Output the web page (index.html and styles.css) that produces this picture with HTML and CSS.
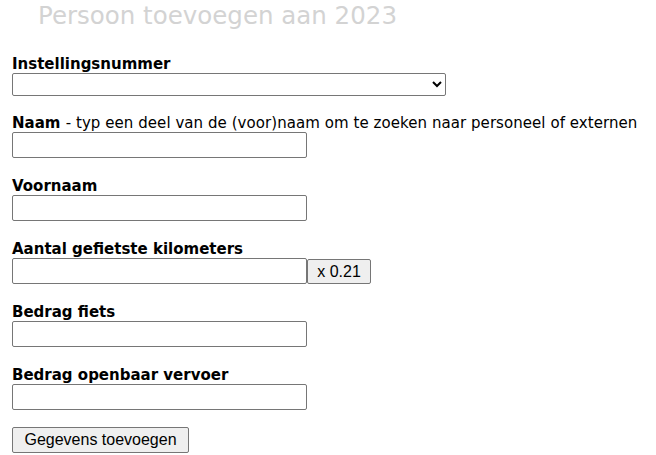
FILE: index.html
```html
<!DOCTYPE html>
<html lang="nl">
<head>
<meta charset="utf-8">
<title>Persoon toevoegen</title>
<link rel="stylesheet" href="styles.css">
</head>
<body>
<h1 class="title">Persoon toevoegen aan 2023</h1>
<form class="form">
  <div class="field field-first">
    <label class="label" for="inst">Instellingsnummer</label>
    <select class="select" id="inst"><option></option></select>
  </div>
  <div class="field">
    <label class="label" for="naam">Naam <span class="hint">- typ een deel van de (voor)naam om te zoeken naar personeel of externen</span></label>
    <input class="input" id="naam" type="text">
  </div>
  <div class="field">
    <label class="label" for="voornaam">Voornaam</label>
    <input class="input" id="voornaam" type="text">
  </div>
  <div class="field">
    <label class="label" for="km">Aantal gefietste kilometers</label>
    <div class="row">
      <input class="input" id="km" type="text"><button type="button" class="btn btn-small">x 0.21</button>
    </div>
  </div>
  <div class="field">
    <label class="label" for="fiets">Bedrag fiets</label>
    <input class="input" id="fiets" type="text">
  </div>
  <div class="field">
    <label class="label" for="ov">Bedrag openbaar vervoer</label>
    <input class="input" id="ov" type="text">
  </div>
  <button type="button" class="btn btn-submit">Gegevens toevoegen</button>
</form>
</body>
</html>
```
FILE: styles.css
```css
html, body {
  margin: 0;
  padding: 0;
  background: #fff;
}
body {
  padding: 0 12px;
  font-family: "DejaVu Sans", Verdana, sans-serif;
  color: #000;
}
.title {
  margin: 0 0 0 26px;
  padding-top: 2px;
  font-size: 24.5px;
  font-weight: normal;
  line-height: 28px;
  color: #d3d3d3;
}
.form {
  margin-top: 26px;
}
.field {
  margin-bottom: 20px;
}
.field-first {
  margin-bottom: 19px;
}
.label {
  display: block;
  font-size: 15px;
  font-weight: bold;
  line-height: 17px;
  height: 17px;
  white-space: nowrap;
}
.hint {
  font-weight: normal;
  letter-spacing: 0.06px;
}
.input, .select {
  display: block;
  box-sizing: border-box;
  margin: 0;
  border: 1px solid #767676;
  border-radius: 2px;
  background: #fff;
  font-family: Arial, "Liberation Sans", sans-serif;
  font-size: 16px;
}
.input {
  width: 295px;
  height: 26px;
}
.select {
  width: 434px;
  height: 23px;
}
.row {
  display: flex;
  align-items: flex-start;
}
.btn {
  box-sizing: border-box;
  margin: 0;
  border: 1px solid #767676;
  border-radius: 2px;
  background: #efefef;
  font-family: Arial, "Liberation Sans", sans-serif;
  font-size: 16px;
  color: #000;
  padding: 0 8px;
  height: 26px;
}
.btn-small {
  width: 64px;
  padding: 0;
  margin-top: 1px;
  height: 25px;
}
.btn-submit {
  display: block;
  width: 177px;
  margin-top: -3px;
  padding: 0;
}
```
